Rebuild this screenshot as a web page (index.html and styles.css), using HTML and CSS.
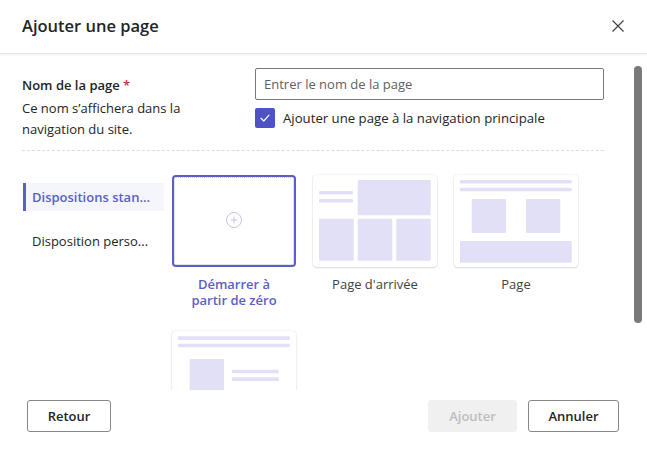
FILE: index.html
```html
<!DOCTYPE html>
<html lang="fr">
<head>
<meta charset="utf-8">
<title>Ajouter une page</title>
<link rel="stylesheet" href="styles.css">
</head>
<body>
<div class="dialog">
  <header class="header">
    <h1 class="title">Ajouter une page</h1>
    <button class="close" aria-label="Fermer">
      <svg width="12" height="12" viewBox="0 0 12 12"><path d="M0.5 0.5 L11.5 11.5 M11.5 0.5 L0.5 11.5" stroke="#424242" stroke-width="1.2" fill="none"/></svg>
    </button>
  </header>

  <main class="body">
    <div class="content">
      <section class="form">
        <div class="form-left">
          <div class="label">Nom de la page <span class="req">*</span></div>
          <p class="desc">Ce nom s’affichera dans la navigation du site.</p>
        </div>
        <div class="form-right">
          <input class="input" type="text" placeholder="Entrer le nom de la page">
          <label class="check-row">
            <span class="checkbox">
              <svg width="12" height="12" viewBox="0 0 12 12"><path d="M2 6.3 L4.8 9 L10 3.2" stroke="#fff" stroke-width="1.2" fill="none" stroke-linecap="round" stroke-linejoin="round"/></svg>
            </span>
            <span class="check-text">Ajouter une page à la navigation principale</span>
          </label>
        </div>
      </section>

      <section class="layouts">
        <nav class="nav">
          <div class="nav-item active">Dispositions stan...</div>
          <div class="nav-item">Disposition perso...</div>
        </nav>
        <div class="grid">
          <div class="tile">
            <div class="card selected">
              <svg width="120" height="88" viewBox="0 0 120 88">
                <circle cx="60" cy="43" r="7.5" fill="none" stroke="#c5c3ea" stroke-width="1"/>
                <path d="M60 39.5 V46.5 M56.5 43 H63.5" stroke="#c5c3ea" stroke-width="1"/>
              </svg>
            </div>
            <div class="tile-label sel">Démarrer à partir de zéro</div>
          </div>
          <div class="tile">
            <div class="card">
              <svg width="124" height="92" viewBox="0 0 124 92">
                <g fill="#e2e0f6">
                  <rect x="6" y="16" width="34" height="3.5" rx="1"/>
                  <rect x="6" y="24" width="34" height="3.5" rx="1"/>
                  <rect x="44.7" y="5" width="73" height="35.3" rx="1"/>
                  <rect x="6" y="43.7" width="34.7" height="42" rx="1"/>
                  <rect x="44.7" y="43.7" width="34.5" height="42" rx="1"/>
                  <rect x="83.3" y="43.7" width="34.4" height="42" rx="1"/>
                </g>
              </svg>
            </div>
            <div class="tile-label">Page d'arrivée</div>
          </div>
          <div class="tile">
            <div class="card">
              <svg width="124" height="92" viewBox="0 0 124 92">
                <g fill="#e2e0f6">
                  <rect x="6" y="5" width="111.7" height="3.6" rx="1"/>
                  <rect x="6" y="12.7" width="111.7" height="3.6" rx="1"/>
                  <rect x="17.7" y="24" width="34.3" height="34" rx="1"/>
                  <rect x="72" y="24" width="34.3" height="34" rx="1"/>
                  <rect x="6" y="66" width="111.7" height="21.7" rx="1"/>
                </g>
              </svg>
            </div>
            <div class="tile-label">Page</div>
          </div>
          <div class="tile">
            <div class="card">
              <svg width="124" height="92" viewBox="0 0 124 92">
                <g fill="#e2e0f6">
                  <rect x="6" y="5.3" width="111.7" height="3.6" rx="1"/>
                  <rect x="6" y="12.7" width="111.7" height="3.6" rx="1"/>
                  <rect x="17.7" y="28" width="34.3" height="40" rx="1"/>
                  <rect x="60" y="38.7" width="46.7" height="3.6" rx="1"/>
                  <rect x="60" y="46.3" width="46.7" height="3.6" rx="1"/>
                </g>
              </svg>
            </div>
          </div>
        </div>
      </section>
    </div>
    <div class="scroll-thumb"></div>
  </main>

  <footer class="footer">
    <button class="btn">Retour</button>
    <div class="footer-right">
      <button class="btn disabled" disabled>Ajouter</button>
      <button class="btn">Annuler</button>
    </div>
  </footer>
</div>
</body>
</html>
```

FILE: styles.css
```css
* { box-sizing: border-box; }

html, body {
  margin: 0;
  padding: 0;
  background: #ffffff;
}

body {
  width: 647px;
  height: 452px;
  overflow: hidden;
  font-family: "Open Sans", "Noto Sans", sans-serif;
  font-size: 13px;
  color: #242424;
}

.dialog {
  display: flex;
  flex-direction: column;
  height: 452px;
}

.header {
  height: 54px;
  flex: none;
  display: flex;
  align-items: center;
  justify-content: space-between;
  padding: 0 23px 2px 22px;
  border-bottom: 1px solid #e6e6e6;
  box-shadow: 0 1px 2px rgba(0, 0, 0, 0.06);
  position: relative;
  z-index: 1;
}

.title {
  margin: 0;
  font-size: 16.5px;
  font-weight: 600;
  color: #242424;
}

.close {
  border: none;
  background: none;
  padding: 0;
  width: 12px;
  height: 12px;
  display: flex;
}

.body {
  flex: 1;
  position: relative;
  overflow: hidden;
}

.content {
  padding: 14px 43px 0 22px;
}

.form {
  display: grid;
  grid-template-columns: 233px 349px;
}

.label {
  margin-top: 7px;
  font-weight: 600;
  line-height: 20px;
}

.req {
  color: #c4314b;
}

.desc {
  margin: 3px 0 0;
  line-height: 21px;
  color: #242424;
  width: 180px;
}

.input {
  display: block;
  width: 349px;
  height: 32px;
  border: 1px solid #7a7a7a;
  border-radius: 2px;
  padding: 0 8px;
  font-family: inherit;
  font-size: 13px;
  color: #242424;
  outline: none;
}

.input::placeholder {
  color: #616161;
}

.check-row {
  display: flex;
  align-items: center;
  gap: 8px;
  margin-top: 8px;
  height: 20px;
}

.checkbox {
  width: 20px;
  height: 20px;
  border-radius: 2px;
  background: #4f52c4;
  display: flex;
  align-items: center;
  justify-content: center;
}

.check-text {
  line-height: 20px;
  font-size: 13.2px;
}

.layouts {
  margin-top: 10px;
  border-top: 1px dashed #dcdcdc;
  display: flex;
  padding-top: 24px;
}

.nav {
  width: 141px;
  margin: 8px 8px 0 1px;
  flex: none;
}

.nav-item {
  height: 28px;
  line-height: 28px;
  padding-left: 9px;
  white-space: nowrap;
  color: #242424;
}

.nav-item + .nav-item {
  margin-top: 16px;
}

.nav-item.active {
  background: #f5f5fc;
  border-left: 3px solid #5b5fc7;
  padding-left: 6px;
  color: #5b5fc7;
  font-weight: 600;
}

.grid {
  display: grid;
  grid-template-columns: repeat(3, 124px);
  column-gap: 17px;
  row-gap: 23px;
}

.tile {
  display: flex;
  flex-direction: column;
  align-items: center;
  height: 133px;
}

.card {
  width: 124px;
  height: 92px;
  background: #ffffff;
  border-radius: 4px;
  box-shadow: 0 0 2px rgba(0, 0, 0, 0.12), 0 1px 2px rgba(0, 0, 0, 0.12);
  display: flex;
}

.card.selected {
  position: relative;
  border: 2px solid #5b5fc7;
  box-shadow: none;
}

.card.selected::after {
  content: "";
  position: absolute;
  inset: 0;
  border: 1px dotted #c8c8c8;
  border-radius: 2px;
}

.tile-label {
  margin-top: 9px;
  width: 124px;
  text-align: center;
  line-height: 16px;
  color: #424242;
  padding: 0 14px;
}

.tile-label.sel {
  color: #5b5fc7;
  font-weight: 600;
}

.scroll-thumb {
  position: absolute;
  right: 5px;
  top: 12px;
  width: 8px;
  height: 257px;
  border-radius: 4px;
  background: #7a7a7a;
}

.footer {
  flex: none;
  height: 62px;
  display: flex;
  justify-content: space-between;
  align-items: flex-start;
  padding: 10px 28px 0 27px;
}

.footer-right {
  display: flex;
  gap: 11px;
}

.btn {
  height: 32px;
  padding: 0 16px;
  min-width: 84px;
  border: 1px solid #8a8886;
  border-radius: 3px;
  background: #ffffff;
  font-family: inherit;
  font-size: 13px;
  font-weight: 600;
  color: #242424;
}

.btn.disabled {
  background: #f0f0f0;
  border-color: #f0f0f0;
  color: #bdbdbd;
  min-width: 89px;
}

.footer-right .btn:last-child {
  min-width: 91px;
}
```
